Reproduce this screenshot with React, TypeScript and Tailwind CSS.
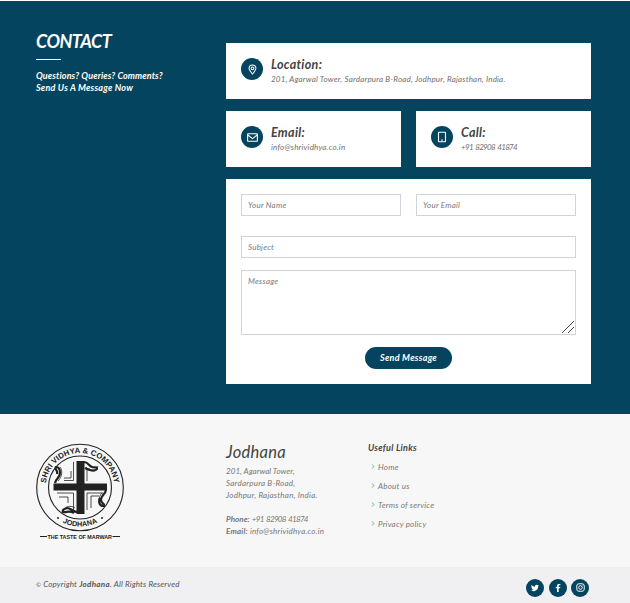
import type { ReactNode } from "react";
import { BiEnvelope } from "react-icons/bi";

const pin = (
  <svg viewBox="0 0 24 24" className="size-[11px]" fill="none" stroke="currentColor" strokeWidth="2.2">
    <path d="M12 22C9 18.500 4.500 14 4.500 9.500a7.500 7.500 0 0 1 15 0C19.500 14 15 18.500 12 22z" />
    <circle cx="12" cy="9.500" r="3" />
  </svg>
);
const phone = (
  <svg viewBox="0 0 24 24" className="size-[12px]" fill="none" stroke="currentColor" strokeWidth="2.2">
    <rect x="5" y="2.500" width="14" height="19" rx="1" />
    <path d="M10.500 18h3" strokeWidth="2.500" />
  </svg>
);

function Info({ icon, title, spacing, children }: { icon: ReactNode; title: string; spacing: string; children: ReactNode }) {
  return (
    <div className="flex h-14 gap-2 bg-white pt-[15px] pl-[15px]">
      <span className="flex size-[22px] shrink-0 items-center justify-center rounded-full bg-[#05445e] text-white">{icon}</span>
      <div className="whitespace-nowrap">
        <h3 className="h-[14px] text-[12.5px] leading-[14px] font-bold tracking-[0.3px] text-[#444]">{title}</h3>
        <p className={"text-[8px] leading-[14px] text-[#707070] " + spacing}>{children}</p>
      </div>
    </div>
  );
}

const field = "block w-full rounded-none border border-[#ced4da] bg-white px-1.5 text-[8px] tracking-[0.22px] italic outline-none placeholder:text-[#747b82]";

function Logo() {
  return (
    <svg viewBox="0 0 90 98" className="h-[98px] w-[90px] text-[#222] not-italic" fill="none" stroke="currentColor">
      <defs>
        <path id="upper" d="M10.500 44.500a34.500 34.500 0 0 1 69 0" />
        <path id="lower" d="M5 43.500a40 40 0 0 0 80 0" />
      </defs>
      <circle cx="45" cy="44.500" r="43.300" strokeWidth="1.1" />
      <circle cx="45" cy="44.500" r="31.500" strokeWidth="1.1" />
      <path d="M41.500 18h8v22.500H72v7H49.500V71h-8V47.500H18.500v-7h23z" fill="currentColor" stroke="none" />
      <path d="M38.500 19v18.500H29M36 28v7h-7M52 38V26h3M68 50H52v17M56 65V53h8M22 50h16.500v17M33 60v-6h-9" strokeWidth=".8" />
      <path d="M49 19c4 0 5 4 8 5 3 1 5-1 5 2-2 3-8 1-12-1M20 40c1-5 5-5 5-10 0-4-1-6-4-6-2 2 2 3 1 7M71 47c-1 5-5 5-5 10 0 4 4 3 3 6-4 0-6-3-4-8M42 69c-4 0-6-4-10-4-3 1-5 2-4 4 3 1 6-2 11 1" strokeWidth="2.2" />
      <path d="M51 24c3 5 9 5 12-1M23 38c4-4 5-10 2-14M67 50c-4 4-4 11 0 14M40 65c-4-3-10-2-12 3" strokeWidth=".8" />
      <g fill="currentColor" stroke="none" fontFamily="Liberation Sans, sans-serif" fontWeight="700">
        <text fontSize="7.800" letterSpacing=".05"><textPath href="#upper" startOffset="50%" textAnchor="middle">SHRI VIDHYA &amp; COMPANY</textPath></text>
        <text fontSize="7.200" letterSpacing=".1" textAnchor="middle"><textPath href="#lower" startOffset="50%">JODHANA</textPath></text>
        <circle cx="23" cy="75" r="1" /><circle cx="67" cy="75" r="1" />
        <text x="12.500" y="95.700" fontSize="5.600" textLength="64.500" lengthAdjust="spacingAndGlyphs">THE TASTE OF MARWAR</text>
      </g>
      <path d="M5 93.500h7M77.500 93.500h7.500" />
    </svg>
  );
}

const links = ["Home", "About us", "Terms of service", "Privacy policy"];

const twitter = "M24 4.560a10 10 0 0 1-2.800.8 5 5 0 0 0 2.200-2.700 10 10 0 0 1-3.100 1.200A4.900 4.900 0 0 0 11.900 8.300 14 14 0 0 1 1.700 3.100 4.900 4.900 0 0 0 3.200 9.700 5 5 0 0 1 1 9.100c0 2.400 1.700 4.400 3.900 4.900a5 5 0 0 1-2.200.1 4.900 4.900 0 0 0 4.600 3.400A10 10 0 0 1 0 19.500 14 14 0 0 0 21.500 7z";

function Social({ children }: { children: ReactNode }) {
  return <a className="flex size-[18px] items-center justify-center rounded-full bg-[#05445e] pb-px text-white">{children}</a>;
}

export default function App() {
  return (
    <div className="w-[630px] bg-[#f7f7f7] font-['Lato','Liberation_Sans',sans-serif] italic">
      <section className="flex h-[414px] border-t border-white bg-[#05445e] pl-9">
        <div className="w-[190px] pt-[30px] text-white">
          <h2 className="text-[18px] leading-5 font-bold tracking-[-0.5px]">CONTACT</h2>
          <div className="mt-2 h-px w-[25px] bg-white" />
          <p className="mt-[10px] text-[9px] leading-3 font-bold tracking-[0.11px] whitespace-nowrap">Questions? Queries? Comments?<br /><span className="tracking-[0.23px]">Send Us A Message Now</span></p>
        </div>
        <div className="flex w-[365px] flex-col gap-3 pt-[42px]">
          <Info icon={pin} title="Location:" spacing="tracking-[0.2px]">201, Agarwal Tower, Sardarpura B-Road, Jodhpur, Rajasthan, India.</Info>
          <div className="grid grid-cols-2 gap-[15px]">
            <Info icon={<BiEnvelope className="size-[13px]" />} title="Email:" spacing="tracking-[0.2px]">info@shrividhya.co.in</Info>
            <Info icon={phone} title="Call:" spacing="tracking-[-0.7px] [word-spacing:1.2px]">+91 82908 41874</Info>
          </div>
          <form className="h-[205px] bg-white p-[15px]">
            <div className="grid grid-cols-2 gap-[15px]">
              <input className={field + " h-[22px]"} placeholder="Your Name" />
              <input className={field + " h-[22px]"} placeholder="Your Email" />
            </div>
            <input className={field + " mt-5 h-[22px]"} placeholder="Subject" />
            <div className="relative mt-3">
              <textarea className={field + " h-[65px] resize-none pt-1 leading-3"} placeholder="Message" />
              <svg viewBox="0 0 14 14" className="absolute right-px bottom-px size-[14px]" stroke="#444" strokeWidth="1"><path d="M1 13L13 1M7 13l6-6" /></svg>
            </div>
            <button type="button" className="mx-auto mt-3 block h-[22px] w-[87px] rounded-full bg-[#05445e] text-[9px] leading-[22px] font-bold tracking-[0.28px] whitespace-nowrap text-white italic">Send Message</button>
          </form>
        </div>
      </section>
      <footer>
        <div className="flex h-[153px] pt-[29px] pl-[35px] text-[8px] text-[#777]">
          <div className="w-[191px]"><Logo /></div>
          <div className="w-[142px]">
            <h3 className="text-[16.5px] leading-[18px] tracking-[0.3px] text-[#444]">Jodhana</h3>
            <p className="mt-1 leading-3 tracking-[0.24px] whitespace-nowrap"><span className="tracking-[0.05px]">201, Agarwal Tower,</span><br />Sardarpura B-Road,<br />Jodhpur, Rajasthan, India.<br /><br /><strong className="tracking-[0.05px]">Phone:</strong> <span className="tracking-[-0.7px] [word-spacing:1.2px]">+91 82908 41874</span><br /><span className="tracking-[0.2px]"><strong>Email:</strong> info@shrividhya.co.in</span></p>
          </div>
          <div>
            <h4 className="text-[9px] leading-[10px] font-bold tracking-[0.28px] text-[#444]">Useful Links</h4>
            <ul className="mt-1">
              {links.map((label) => (
                <li key={label} className="flex h-[19px] items-center gap-[3px] pl-[3px] tracking-[0.22px]">
                  <svg viewBox="0 0 4 6" className="h-[5px] w-1" fill="none" stroke="#52a596" strokeWidth="1"><path d="M1 .5L3 3 1 5.500" /></svg>
                  {label}
                </li>
              ))}
            </ul>
          </div>
        </div>
        <div className="flex h-9 items-start justify-between bg-[#f0f0f3] pr-[41px] pl-9">
          <p className="pt-[11px] text-[8px] leading-3 tracking-[0.16px] text-[#555]"><span className="text-[6px]">©</span> Copyright <strong className="tracking-[0.3px]">Jodhana</strong>. All Rights Reserved</p>
          <div className="flex gap-[4.5px] pt-3">
            <Social><svg viewBox="0 0 24 24" className="size-2" fill="currentColor"><path d={twitter} /></svg></Social>
            <Social><svg viewBox="0 0 24 24" className="size-2" fill="currentColor"><path d="M9 24V13H5V9h4V6c0-4 2.500-6 6-6h4v4h-3c-2 0-2 1-2 2.500V9h5l-1 4h-4v11z" /></svg></Social>
            <Social><svg viewBox="0 0 24 24" className="size-[9px]" fill="none" stroke="currentColor" strokeWidth="2.500"><rect x="2" y="2" width="20" height="20" rx="6" /><circle cx="12" cy="12" r="4.800" /><path d="M17 6h1" /></svg></Social>
          </div>
        </div>
      </footer>
    </div>
  );
}
